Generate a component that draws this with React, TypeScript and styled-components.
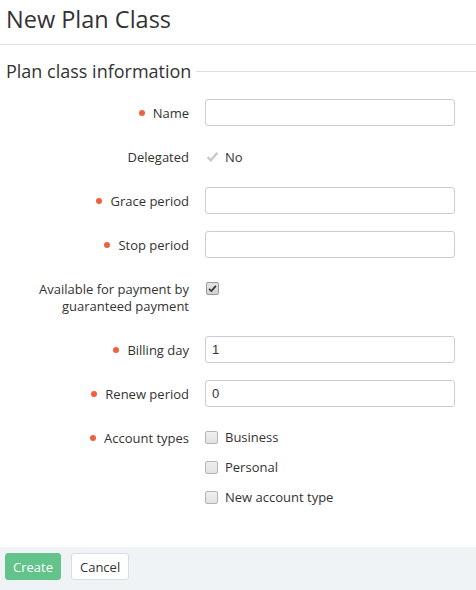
import React from "react";
import styled, { createGlobalStyle } from "styled-components";

const Global = createGlobalStyle`
  html, body { margin: 0; padding: 0; background: #fff; }
  body { font-family: "Open Sans", "Liberation Sans", sans-serif; color: #333; }
  * { box-sizing: border-box; }
`;

const Page = styled.div`
  width: 476px;
  height: 590px;
  display: flex;
  flex-direction: column;
  overflow: hidden;
`;

const Title = styled.h1`
  margin: 0;
  padding: 3px 6px 0;
  height: 45px;
  font-size: 23.5px;
  font-weight: 400;
  line-height: 32px;
  color: #333;
  border-bottom: 1px solid #dcdde1;
`;

const Section = styled.div`
  display: flex;
  align-items: flex-start;
  gap: 5px;
  padding: 14px 0 0 6px;
  height: 54px;
`;

const SectionTitle = styled.h2`
  margin: 0;
  font-size: 18px;
  font-weight: 400;
  line-height: 24px;
  color: #333;
  white-space: nowrap;
`;

const SectionLine = styled.div`
  flex: 1;
  height: 1px;
  margin-top: 12px;
  background: #dcdde1;
`;

const Form = styled.div`
  display: grid;
  grid-template-columns: 189px 250px;
  column-gap: 16px;
  row-gap: 17px;
  align-items: start;
`;

const Label = styled.div<{ $required?: boolean }>`
  font-size: 13px;
  line-height: 16.5px;
  padding: 6px 0 4.5px;
  text-align: right;
  color: #333;
  &::before {
    content: "";
    display: ${(p) => (p.$required ? "inline-block" : "none")};
    width: 6px;
    height: 6px;
    border-radius: 50%;
    background: #f0603a;
    margin-right: 8px;
    vertical-align: 2px;
  }
`;

const Input = styled.input`
  width: 250px;
  height: 27px;
  border: 1px solid #c9ced5;
  border-radius: 3px;
  padding: 0 6px;
  font-family: "Liberation Sans", Arial, sans-serif;
  font-size: 13px;
  color: #333;
  background: #fff;
  outline: none;
`;

const Static = styled.div`
  display: flex;
  align-items: center;
  gap: 6px;
  height: 27px;
  font-size: 13px;
  padding-left: 1px;
`;

const CheckList = styled.div`
  display: flex;
  flex-direction: column;
  gap: 3px;
`;

const CheckRow = styled.label`
  display: flex;
  align-items: center;
  gap: 7px;
  height: 27px;
  font-size: 13px;
  color: #333;
`;

const Box = styled.span<{ $checked?: boolean }>`
  display: inline-flex;
  align-items: center;
  justify-content: center;
  width: 13px;
  height: 13px;
  border: 1px solid ${(p) => (p.$checked ? "#9a9a9a" : "#b5b5b5")};
  border-radius: 2px;
  background: ${(p) =>
    p.$checked
      ? "linear-gradient(#e4e4e4, #d2d2d2)"
      : "linear-gradient(#efefef, #e2e2e2)"};
`;

const CheckCell = styled.div`
  height: 27px;
  display: flex;
  align-items: flex-start;
  padding-top: 7px;
  padding-left: 1px;
`;

const Footer = styled.div`
  margin-top: auto;
  background: #f0f3f6;
  display: flex;
  gap: 10px;
  padding: 6px 5px 10px;
`;

const Button = styled.button<{ $primary?: boolean }>`
  height: 27px;
  padding: 0 ${(p) => (p.$primary ? "7px" : "8px")};
  font-family: "Open Sans", "Liberation Sans", sans-serif;
  font-size: 13px;
  border-radius: 3px;
  border: 1px solid ${(p) => (p.$primary ? "#62c38b" : "#d9dde2")};
  background: ${(p) => (p.$primary ? "#62c38b" : "#fff")};
  color: ${(p) => (p.$primary ? "#fff" : "#333")};
`;

const CheckMark = ({ color, size }: { color: string; size: number }) => (
  <svg width={size} height={size} viewBox="0 0 12 12">
    <path d="M1.5 6.5 L4.5 9.5 L10.5 2.5" fill="none" stroke={color} strokeWidth="2.2" strokeLinejoin="miter" />
  </svg>
);

export default function App() {
  return (
    <Page>
      <Global />
      <Title>New Plan Class</Title>
      <Section>
        <SectionTitle>Plan class information</SectionTitle>
        <SectionLine />
      </Section>
      <Form>
        <Label $required>Name</Label>
        <Input />

        <Label>Delegated</Label>
        <Static>
          <CheckMark color="#c3c9cf" size={13} />
          <span>No</span>
        </Static>

        <Label $required>Grace period</Label>
        <Input />

        <Label $required>Stop period</Label>
        <Input />

        <Label>
          Available for payment by
          <br />
          guaranteed payment
        </Label>
        <CheckCell>
          <Box $checked>
            <CheckMark color="#333" size={9} />
          </Box>
        </CheckCell>

        <Label $required>Billing day</Label>
        <Input defaultValue="1" />

        <Label $required>Renew period</Label>
        <Input defaultValue="0" />

        <Label $required>Account types</Label>
        <CheckList>
          <CheckRow>
            <Box />
            Business
          </CheckRow>
          <CheckRow>
            <Box />
            Personal
          </CheckRow>
          <CheckRow>
            <Box />
            New account type
          </CheckRow>
        </CheckList>
      </Form>
      <Footer>
        <Button $primary>Create</Button>
        <Button>Cancel</Button>
      </Footer>
    </Page>
  );
}
